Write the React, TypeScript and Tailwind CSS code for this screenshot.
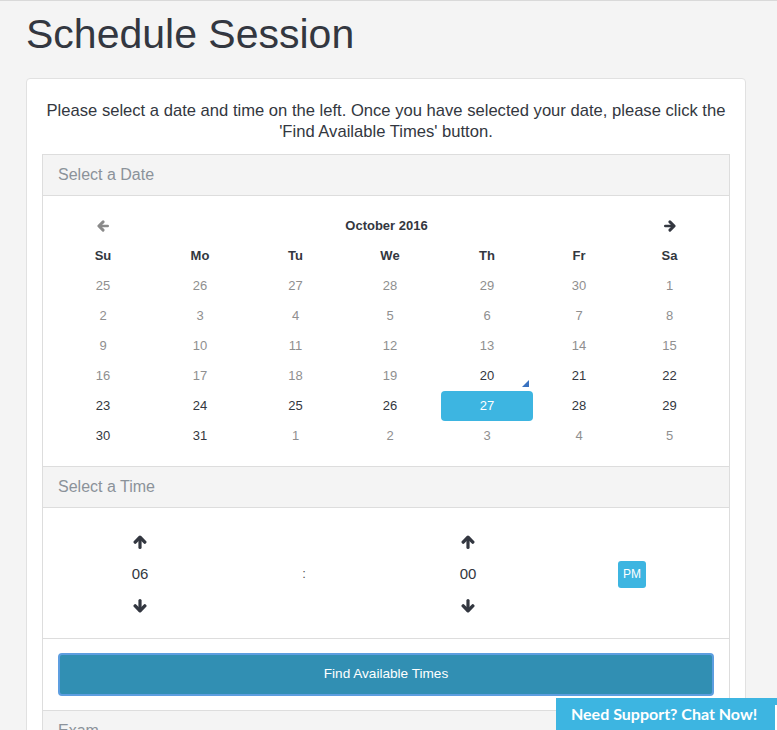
import type { JSX } from "react";

type Day = { n: number; active: boolean };

const dayNames = ["Su", "Mo", "Tu", "We", "Th", "Fr", "Sa"];

// October 2016, dates from the 20th on are selectable
const weeks: Day[][] = [
  [25, 26, 27, 28, 29, 30, 1],
  [2, 3, 4, 5, 6, 7, 8],
  [9, 10, 11, 12, 13, 14, 15],
  [16, 17, 18, 19, 20, 21, 22],
  [23, 24, 25, 26, 27, 28, 29],
  [30, 31, 1, 2, 3, 4, 5],
].map((week, wi) =>
  week.map((n) => ({
    n,
    active: (wi === 3 && n >= 20) || wi === 4 || (wi === 5 && n >= 30),
  }))
);

const cols = "grid grid-cols-[90px_104px_87px_102px_92px_92px_89px]";

// chunky arrow like the old font-awesome one
function Arrow({ dir, className }: { dir: "up" | "down" | "left" | "right"; className?: string }): JSX.Element {
  const rot = { up: 0, right: 90, down: 180, left: 270 }[dir];
  return (
    <svg viewBox="0 0 14 14" className={className} fill="none">
      <g transform={`rotate(${rot} 7 7)`} stroke="currentColor" strokeLinecap="round" strokeLinejoin="round">
        <path d="M7 12.4V3" strokeWidth="3.2" />
        <path d="M2.2 7.1L7 2.2l4.8 4.9" strokeWidth="3.4" />
      </g>
    </svg>
  );
}

function PanelHeader({ title }: { title: string }): JSX.Element {
  return (
    <div className="h-[41px] bg-[#f4f4f4] border-b border-[#dddddd] px-[15px] flex items-center text-[16px] text-[#8b929a]">
      {title}
    </div>
  );
}

export default function App(): JSX.Element {
  return (
    <div
      className="min-h-[730px] bg-[#f4f4f4] border-t border-[#d9d9d9] pb-10 text-[#333740]"
      style={{ fontFamily: '"Liberation Sans", Arial, sans-serif' }}
    >
      <div className="pl-[26px] pr-[31px]">
        <h1 className="text-[41px] leading-[48px] pt-[9px] pb-[20px] text-[#333740]">
          Schedule Session
        </h1>

        <div className="bg-white border border-[#e1e1e1] rounded-[4px] px-[15px] pt-[21px] pb-4">
          <p className="text-center text-[16.6px] leading-[21px] text-[#333740]">
            Please select a date and time on the left. Once you have selected your date, please click the
            'Find Available Times' button.
          </p>

          <div className="mt-[12px] border border-[#dddddd]">
            <PanelHeader title="Select a Date" />

            {/* calendar */}
            <div className="px-[15px] py-[15px] border-b border-[#dddddd] text-[13px]">
              <div className={`${cols} h-[30px] items-center`}>
                <div className="flex justify-center text-[#8a8a8a]">
                  <Arrow dir="left" className="w-[12px] h-[12px]" />
                </div>
                <div className="col-span-5 text-center font-bold text-[#333740]">October 2016</div>
                <div className="flex justify-center text-[#333740]">
                  <Arrow dir="right" className="w-[12px] h-[12px]" />
                </div>
              </div>
              <div className={`${cols} h-[30px] items-center`}>
                {dayNames.map((d) => (
                  <div key={d} className="text-center font-bold text-[#333740]">
                    {d}
                  </div>
                ))}
              </div>
              {weeks.map((week, wi) => (
                <div key={wi} className={`${cols} h-[30px]`}>
                  {week.map((day, di) => {
                    const selected = wi === 4 && day.n === 27;
                    const today = wi === 3 && day.n === 20;
                    return (
                      <div
                        key={di}
                        className={
                          selected
                            ? "relative flex items-center justify-center rounded-[4px] bg-[#3db5e1] text-white"
                            : day.active
                            ? "relative flex items-center justify-center text-[#333740]"
                            : "relative flex items-center justify-center text-[#8f8f8f]"
                        }
                      >
                        {day.n}
                        {today && (
                          <span className="absolute right-[4px] bottom-[4px] w-0 h-0 border-l-[7px] border-l-transparent border-b-[7px] border-b-[#3a72c0]" />
                        )}
                      </div>
                    );
                  })}
                </div>
              ))}
            </div>

            <PanelHeader title="Select a Time" />

            {/* time picker */}
            <div className="px-[15px] pt-[18px] pb-[16px] border-b border-[#dddddd]">
              <div className="grid grid-cols-4 text-[#333740]">
                <div className="flex flex-col items-center">
                  <div className="h-[32px] flex items-center">
                    <Arrow dir="up" className="w-[14px] h-[14px]" />
                  </div>
                  <div className="h-[32px] flex items-center text-[15px]">06</div>
                  <div className="h-[32px] flex items-center">
                    <Arrow dir="down" className="w-[14px] h-[14px]" />
                  </div>
                </div>
                <div className="flex items-center justify-center text-[13px] text-[#555]">:</div>
                <div className="flex flex-col items-center">
                  <div className="h-[32px] flex items-center">
                    <Arrow dir="up" className="w-[14px] h-[14px]" />
                  </div>
                  <div className="h-[32px] flex items-center text-[15px]">00</div>
                  <div className="h-[32px] flex items-center">
                    <Arrow dir="down" className="w-[14px] h-[14px]" />
                  </div>
                </div>
                <div className="flex items-center justify-center">
                  <div className="w-[28px] h-[27px] rounded-[3px] bg-[#3db5e1] text-white text-[12px] flex items-center justify-center">
                    PM
                  </div>
                </div>
              </div>
            </div>

            {/* action */}
            <div className="px-[15px] py-[14px] border-b border-[#dddddd]">
              <button className="w-full h-[43px] rounded-[4px] bg-[#318fb3] border-2 border-[#5d9ee0] text-white text-[13.6px] flex items-center justify-center">
                Find Available Times
              </button>
            </div>

            <PanelHeader title="Exam" />
            <div className="h-[120px]" />
          </div>
        </div>
      </div>

      {/* chat tab */}
      <div className="fixed right-0 bottom-0 w-[221px] h-[32px] bg-[#3db5e1] flex items-center pl-[15px]">
        <span className="text-white font-bold text-[16px]" style={{ fontFamily: "Lato, sans-serif" }}>
          Need Support? Chat Now!
        </span>
        <span className="absolute right-0 top-[7px] w-[2px] h-[25px] bg-white" />
      </div>
    </div>
  );
}
